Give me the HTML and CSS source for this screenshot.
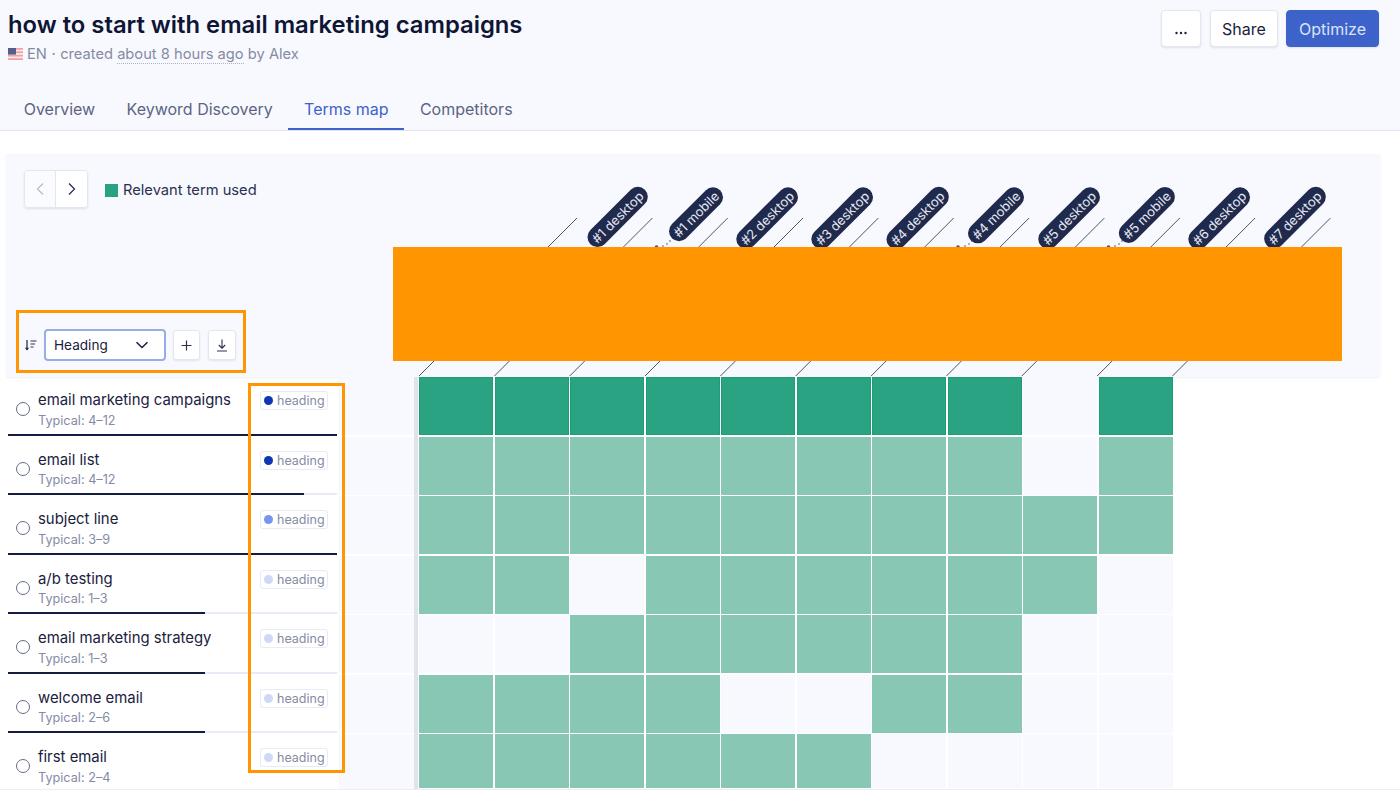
FILE: index.html
```html
<!DOCTYPE html>
<html lang="en">
<head>
    <meta charset="UTF-8">
    <title>how to start with email marketing campaigns</title>
    <link rel="stylesheet" href="styles.css">
</head>
<body>
    <header class="top">
        <div class="top-row">
            <div>
                <h1 class="title">how to start with email marketing campaigns</h1>
                <div class="meta">
                    <svg class="flag" width="15" height="12" viewBox="0 0 15 12">
                        <rect width="15" height="12" fill="#fbe9ea"/>
                        <rect y="0" width="15" height="1.7" fill="#eda3a6"/>
                        <rect y="3.4" width="15" height="1.7" fill="#eda3a6"/>
                        <rect y="6.8" width="15" height="1.7" fill="#eda3a6"/>
                        <rect y="10.2" width="15" height="1.8" fill="#eda3a6"/>
                        <rect width="8" height="6.6" fill="#565f8c"/>
                    </svg>
                    <span>EN</span>
                    <span class="sep">·</span>
                    <span>created <span class="dotted">about 8 hours ago</span> by Alex</span>
                </div>
            </div>
            <div class="actions">
                <button class="btn btn-more">
                    <svg width="14" height="4" viewBox="0 0 14 4"><circle cx="2.5" cy="2" r="1.2" fill="#1a2140"/><circle cx="7" cy="2" r="1.2" fill="#1a2140"/><circle cx="11.5" cy="2" r="1.2" fill="#1a2140"/></svg>
                </button>
                <button class="btn btn-share">Share</button>
                <button class="btn btn-primary">Optimize</button>
            </div>
        </div>
        <nav class="tabs">
            <a class="tab">Overview</a>
            <a class="tab">Keyword Discovery</a>
            <a class="tab active">Terms map</a>
            <a class="tab">Competitors</a>
        </nav>
    </header>

    <section class="panel">
        <svg class="rays" width="1374" height="223" viewBox="6 154 1374 223">
            <g stroke="#4d5370" stroke-width="1">
                <line x1="419" y1="376" x2="577" y2="218"/>
                <line x1="494.4" y1="376" x2="652.4" y2="218"/>
                <line x1="569.7" y1="376" x2="727.7" y2="218"/>
                <line x1="645" y1="376" x2="803" y2="218"/>
                <line x1="720.4" y1="376" x2="878.4" y2="218"/>
                <line x1="795.7" y1="376" x2="953.7" y2="218"/>
                <line x1="871.1" y1="376" x2="1029.1" y2="218"/>
                <line x1="946.4" y1="376" x2="1104.4" y2="218"/>
                <line x1="1021.8" y1="376" x2="1179.8" y2="218"/>
                <line x1="1097.1" y1="376" x2="1255.1" y2="218"/>
                <line x1="1172.5" y1="376" x2="1330.5" y2="218"/>
            </g>
            <g fill="#4d5370">
                <circle cx="656.5" cy="247" r="1.800"/><circle cx="663" cy="246" r=".8"/><circle cx="667" cy="244" r=".8"/><circle cx="670" cy="241" r=".8"/>
                <circle cx="958" cy="247" r="1.800"/><circle cx="965" cy="246" r=".8"/><circle cx="969" cy="244" r=".8"/><circle cx="972" cy="241" r=".8"/>
                <circle cx="1108.500" cy="247" r="1.800"/><circle cx="1115" cy="246" r=".8"/><circle cx="1119" cy="244" r=".8"/><circle cx="1122" cy="241" r=".8"/>
            </g>
        </svg>

        <div class="heads">
            <div class="head"><span class="pill">#1 desktop</span></div>
            <div class="head"><span class="pill">#1 mobile</span></div>
            <div class="head"><span class="pill">#2 desktop</span></div>
            <div class="head"><span class="pill">#3 desktop</span></div>
            <div class="head"><span class="pill">#4 desktop</span></div>
            <div class="head"><span class="pill">#4 mobile</span></div>
            <div class="head"><span class="pill">#5 desktop</span></div>
            <div class="head"><span class="pill">#5 mobile</span></div>
            <div class="head"><span class="pill">#6 desktop</span></div>
            <div class="head"><span class="pill">#7 desktop</span></div>
        </div>

        <div class="orange-block"></div>

        <div class="toolbar">
            <div class="pager">
                <button class="page-btn" disabled>
                    <svg width="10" height="14" viewBox="0 0 10 14"><path d="M8 1.5 2.5 7 8 12.500" fill="none" stroke="#b9bdcd" stroke-width="1.3"/></svg>
                </button>
                <button class="page-btn">
                    <svg width="10" height="14" viewBox="0 0 10 14"><path d="M2 1.5 7.500 7 2 12.500" fill="none" stroke="#2a3150" stroke-width="1.3"/></svg>
                </button>
            </div>
            <span class="swatch"></span>
            <span class="legend">Relevant term used</span>
        </div>

        <div class="controls">
            <svg class="sort" width="13" height="13" viewBox="0 0 13 13">
                <path d="M3 1v10" stroke="#2a3150" stroke-width="1.3" fill="none"/>
                <path d="M.8 8.800 3 11.500 5.200 8.800" fill="#2a3150"/>
                <path d="M6.500 2h6M6.500 5h4.500M6.500 8h3" stroke="#2a3150" stroke-width="1.200" fill="none"/>
            </svg>
            <div class="select">
                <span>Heading</span>
                <svg width="14" height="8" viewBox="0 0 14 8"><path d="M1.500 1.200 7 6.500l5.500-5.300" fill="none" stroke="#1a2140" stroke-width="1.500"/></svg>
            </div>
            <button class="icon-btn">
                <svg width="11" height="11" viewBox="0 0 11 11"><path d="M5.500.5v10M.5 5.500h10" stroke="#2a3150" stroke-width="1.200"/></svg>
            </button>
            <button class="icon-btn icon-btn-wide">
                <svg width="12" height="13" viewBox="0 0 12 13"><path d="M6 .5v8.500M2.800 6 6 9.200 9.200 6M1 12h10" fill="none" stroke="#2a3150" stroke-width="1.100"/></svg>
            </button>
        </div>
    </section>

    <section class="rows">
        <div class="tags-frame"></div>

        <div class="row">
            <div class="term">
                <span class="radio"></span>
                <div class="term-text"><div class="term-name">email marketing campaigns</div><div class="term-sub">Typical: 4–12</div></div>
                <span class="tag"><i class="dot dot-high"></i>heading</span>
                <div class="track"><div class="fill" style="width:100%"></div></div>
            </div>
            <div class="strip"></div><div class="bar"></div>
            <div class="cells">
                <div class="cell dark"></div><div class="cell dark"></div><div class="cell dark"></div><div class="cell dark"></div><div class="cell dark"></div><div class="cell dark"></div><div class="cell dark"></div><div class="cell dark"></div><div class="cell"></div><div class="cell dark"></div>
            </div>
        </div>

        <div class="row">
            <div class="term">
                <span class="radio"></span>
                <div class="term-text"><div class="term-name">email list</div><div class="term-sub">Typical: 4–12</div></div>
                <span class="tag"><i class="dot dot-high"></i>heading</span>
                <div class="track"><div class="fill" style="width:90%"></div></div>
            </div>
            <div class="strip"></div><div class="bar"></div>
            <div class="cells">
                <div class="cell on"></div><div class="cell on"></div><div class="cell on"></div><div class="cell on"></div><div class="cell on"></div><div class="cell on"></div><div class="cell on"></div><div class="cell on"></div><div class="cell"></div><div class="cell on"></div>
            </div>
        </div>

        <div class="row">
            <div class="term">
                <span class="radio"></span>
                <div class="term-text"><div class="term-name">subject line</div><div class="term-sub">Typical: 3–9</div></div>
                <span class="tag"><i class="dot dot-mid"></i>heading</span>
                <div class="track"><div class="fill" style="width:100%"></div></div>
            </div>
            <div class="strip"></div><div class="bar"></div>
            <div class="cells">
                <div class="cell on"></div><div class="cell on"></div><div class="cell on"></div><div class="cell on"></div><div class="cell on"></div><div class="cell on"></div><div class="cell on"></div><div class="cell on"></div><div class="cell on"></div><div class="cell on"></div>
            </div>
        </div>

        <div class="row">
            <div class="term">
                <span class="radio"></span>
                <div class="term-text"><div class="term-name">a/b testing</div><div class="term-sub">Typical: 1–3</div></div>
                <span class="tag"><i class="dot dot-low"></i>heading</span>
                <div class="track"><div class="fill" style="width:60%"></div></div>
            </div>
            <div class="strip"></div><div class="bar"></div>
            <div class="cells">
                <div class="cell on"></div><div class="cell on"></div><div class="cell"></div><div class="cell on"></div><div class="cell on"></div><div class="cell on"></div><div class="cell on"></div><div class="cell on"></div><div class="cell on"></div><div class="cell"></div>
            </div>
        </div>

        <div class="row">
            <div class="term">
                <span class="radio"></span>
                <div class="term-text"><div class="term-name">email marketing strategy</div><div class="term-sub">Typical: 1–3</div></div>
                <span class="tag"><i class="dot dot-low"></i>heading</span>
                <div class="track"><div class="fill" style="width:60%"></div></div>
            </div>
            <div class="strip"></div><div class="bar"></div>
            <div class="cells">
                <div class="cell"></div><div class="cell"></div><div class="cell on"></div><div class="cell on"></div><div class="cell on"></div><div class="cell on"></div><div class="cell on"></div><div class="cell on"></div><div class="cell"></div><div class="cell"></div>
            </div>
        </div>

        <div class="row">
            <div class="term">
                <span class="radio"></span>
                <div class="term-text"><div class="term-name">welcome email</div><div class="term-sub">Typical: 2–6</div></div>
                <span class="tag"><i class="dot dot-low"></i>heading</span>
                <div class="track"><div class="fill" style="width:60%"></div></div>
            </div>
            <div class="strip"></div><div class="bar"></div>
            <div class="cells">
                <div class="cell on"></div><div class="cell on"></div><div class="cell on"></div><div class="cell on"></div><div class="cell"></div><div class="cell"></div><div class="cell on"></div><div class="cell on"></div><div class="cell"></div><div class="cell"></div>
            </div>
        </div>

        <div class="row row-last">
            <div class="term">
                <span class="radio"></span>
                <div class="term-text"><div class="term-name">first email</div><div class="term-sub">Typical: 2–4</div></div>
                <span class="tag"><i class="dot dot-low"></i>heading</span>
            </div>
            <div class="strip"></div><div class="bar"></div>
            <div class="cells">
                <div class="cell on"></div><div class="cell on"></div><div class="cell on"></div><div class="cell on"></div><div class="cell on"></div><div class="cell on"></div><div class="cell"></div><div class="cell"></div><div class="cell"></div><div class="cell"></div>
            </div>
        </div>
    </section>
</body>
</html>
```

FILE: styles.css
```css
body {
    margin: 0;
    height: 790px;
    overflow: hidden;
    background-color: #fff;
    font-family: Inter, "Liberation Sans", sans-serif;
    color: #1a2140;
}
button {
    font-family: inherit;
}

/* top header */
.top {
    height: 130px;
    background-color: #f8f9fe;
    border-bottom: 1px solid #e2e5f1;
}
.top-row {
    display: flex;
    justify-content: space-between;
    padding: 10px 21px 0 8px;
    height: 73px;
}
.title {
    margin: 0;
    font-size: 23.8px;
    line-height: 30px;
    font-weight: 600;
    color: #0e1535;
}
.meta {
    display: flex;
    align-items: center;
    margin-top: 4px;
    font-size: 14.7px;
    line-height: 20px;
    color: #858ba5;
}
.flag {
    margin-right: 4px;
}
.sep {
    margin: 0 4.5px;
}
.dotted {
    border-bottom: 1px dotted #aeb2c6;
}
.actions {
    display: flex;
    gap: 8px;
}
.btn {
    height: 37px;
    border: 1px solid #e4e6f0;
    border-radius: 4px;
    background-color: #fff;
    box-shadow: 0 1px 2px rgba(40, 50, 90, .12);
    font-size: 16px;
    color: #1a2140;
    padding: 0;
}
.btn-more {
    width: 40px;
}
.btn-share {
    width: 68px;
    margin-left: 1px;
}
.btn-primary {
    width: 93px;
    background-color: #3d62c9;
    border-color: #3d62c9;
    color: #dbe3fa;
}
.tabs {
    display: flex;
    padding-left: 8px;
}
.tab {
    height: 47px;
    padding: 0 15.7px;
    box-sizing: border-box;
    font-size: 16px;
    line-height: 52px;
    color: #5b6482;
    border-bottom: 2px solid transparent;
}
.tab.active {
    color: #3d62c9;
    border-bottom-color: #3d62c9;
}

/* chart header panel */
.panel {
    position: relative;
    box-sizing: border-box;
    display: flex;
    flex-direction: column;
    justify-content: space-between;
    width: 1374px;
    height: 223px;
    margin: 23px 0 0 6px;
    padding: 16px 0 4px 10px;
    background-color: #f8f9fe;
    box-shadow: 0 1px 2px rgba(40, 50, 90, .07);
}
.rays {
    position: absolute;
    left: 0;
    top: 0;
}
.heads {
    position: absolute;
    left: 575px;
    top: 33px;
    display: flex;
}
.head {
    position: relative;
    width: 75.4px;
    height: 60px;
}
.pill {
    position: absolute;
    right: 12px;
    top: -7px;
    height: 20px;
    padding: 0 5px;
    border-radius: 10px;
    background-color: #1f2a4d;
    color: #e6e8f2;
    font-size: 13px;
    line-height: 20px;
    white-space: nowrap;
    transform: rotate(-45deg);
    transform-origin: 100% 50%;
}
.orange-block {
    position: absolute;
    left: 387px;
    top: 93px;
    width: 949px;
    height: 114px;
    background-color: #ff9500;
}
.toolbar {
    display: flex;
    align-items: center;
    margin-left: 8px;
}
.pager {
    display: flex;
    height: 36px;
    border: 1px solid #e4e6f0;
    border-radius: 4px;
    box-shadow: 0 1px 2px rgba(40, 50, 90, .12);
    overflow: hidden;
}
.page-btn {
    width: 31px;
    padding: 0;
    border: 0;
    background-color: #fff;
    display: flex;
    align-items: center;
    justify-content: center;
}
.page-btn:disabled {
    background-color: #fafbfe;
    border-right: 1px solid #e4e6f0;
}
.swatch {
    width: 13px;
    height: 13px;
    margin: 2px 5px 0 17px;
    background-color: #27a381;
}
.legend {
    margin-top: 2px;
    font-size: 14.7px;
    color: #2a3150;
}
.controls {
    box-sizing: border-box;
    display: flex;
    align-items: center;
    gap: 7px;
    width: 230px;
    height: 63px;
    padding: 7px 0 0 5px;
    border: 3px solid #ff9500;
}
.select {
    box-sizing: border-box;
    display: flex;
    align-items: center;
    justify-content: space-between;
    width: 122px;
    height: 32px;
    padding: 0 15px 0 8px;
    background-color: #fff;
    border: 2px solid #98ace6;
    border-radius: 4px;
    font-size: 13.6px;
}
.icon-btn {
    display: flex;
    align-items: center;
    justify-content: center;
    width: 27px;
    height: 30px;
    padding: 0;
    background-color: #fff;
    border: 1px solid #e4e6f0;
    border-radius: 3px;
    box-shadow: 0 1px 2px rgba(40, 50, 90, .1);
}
.icon-btn-wide {
    width: 28px;
    margin-left: 1px;
}

/* term rows */
.rows {
    position: relative;
    border-bottom: 1px solid #eceef6;
}
.tags-frame {
    position: absolute;
    left: 248px;
    top: 6px;
    width: 97px;
    height: 390px;
    box-sizing: border-box;
    border: 3px solid #ff9500;
    z-index: 2;
}
.row {
    display: flex;
    align-items: flex-start;
    height: 59.5px;
}
.row-last {
    height: 55px;
    overflow: hidden;
}
.term {
    position: relative;
    box-sizing: border-box;
    display: flex;
    width: 331px;
    height: 59.5px;
    margin-left: 8px;
    padding: 14px 11px 0 8px;
}
.radio {
    box-sizing: border-box;
    width: 14px;
    height: 14px;
    margin: 11px 8px 0 0;
    border: 1.7px solid #666d8a;
    border-radius: 50%;
}
.term-name {
    font-size: 14.9px;
    line-height: 18px;
    color: #1a2140;
}
.term-text {
    flex: 1;
}
.term-sub {
    margin-top: 3.5px;
    font-size: 12.7px;
    line-height: 16px;
    color: #858ba5;
}
.tag {
    display: flex;
    align-items: center;
    box-sizing: border-box;
    height: 19px;
    width: 68px;
    padding-left: 3px;
    background-color: #fff;
    border: 1px solid #e8eaf6;
    border-radius: 3px;
    font-size: 12.5px;
    color: #858ba5;
}
.dot {
    width: 9px;
    height: 9px;
    margin-right: 4px;
    border-radius: 50%;
}
.dot-high {
    background-color: #0f36b4;
}
.dot-mid {
    background-color: #7795ef;
}
.dot-low {
    background-color: #cfd9f7;
}
.track {
    position: absolute;
    left: 0;
    right: 2px;
    bottom: 1px;
    height: 2px;
    background-color: #e8eaf5;
}
.fill {
    height: 2px;
    background-color: #151c42;
}
.strip {
    width: 75px;
    height: 58px;
    background-color: #f8f9fe;
}
.bar {
    width: 4px;
    height: 59.5px;
    margin-right: 1px;
    background-color: #e0e2ec;
}
.cells {
    display: grid;
    grid-template-columns: repeat(10, 74px);
    column-gap: 1.5px;
}
.cell {
    height: 58px;
    background-color: #f8f9fe;
}
.row-last .cell {
    height: 54px;
}
.cell.on {
    background-color: #88c7b3;
}
.cell.dark {
    background-color: #29a381;
    box-shadow: inset 0 0 0 1px #1e9c79;
}
```
